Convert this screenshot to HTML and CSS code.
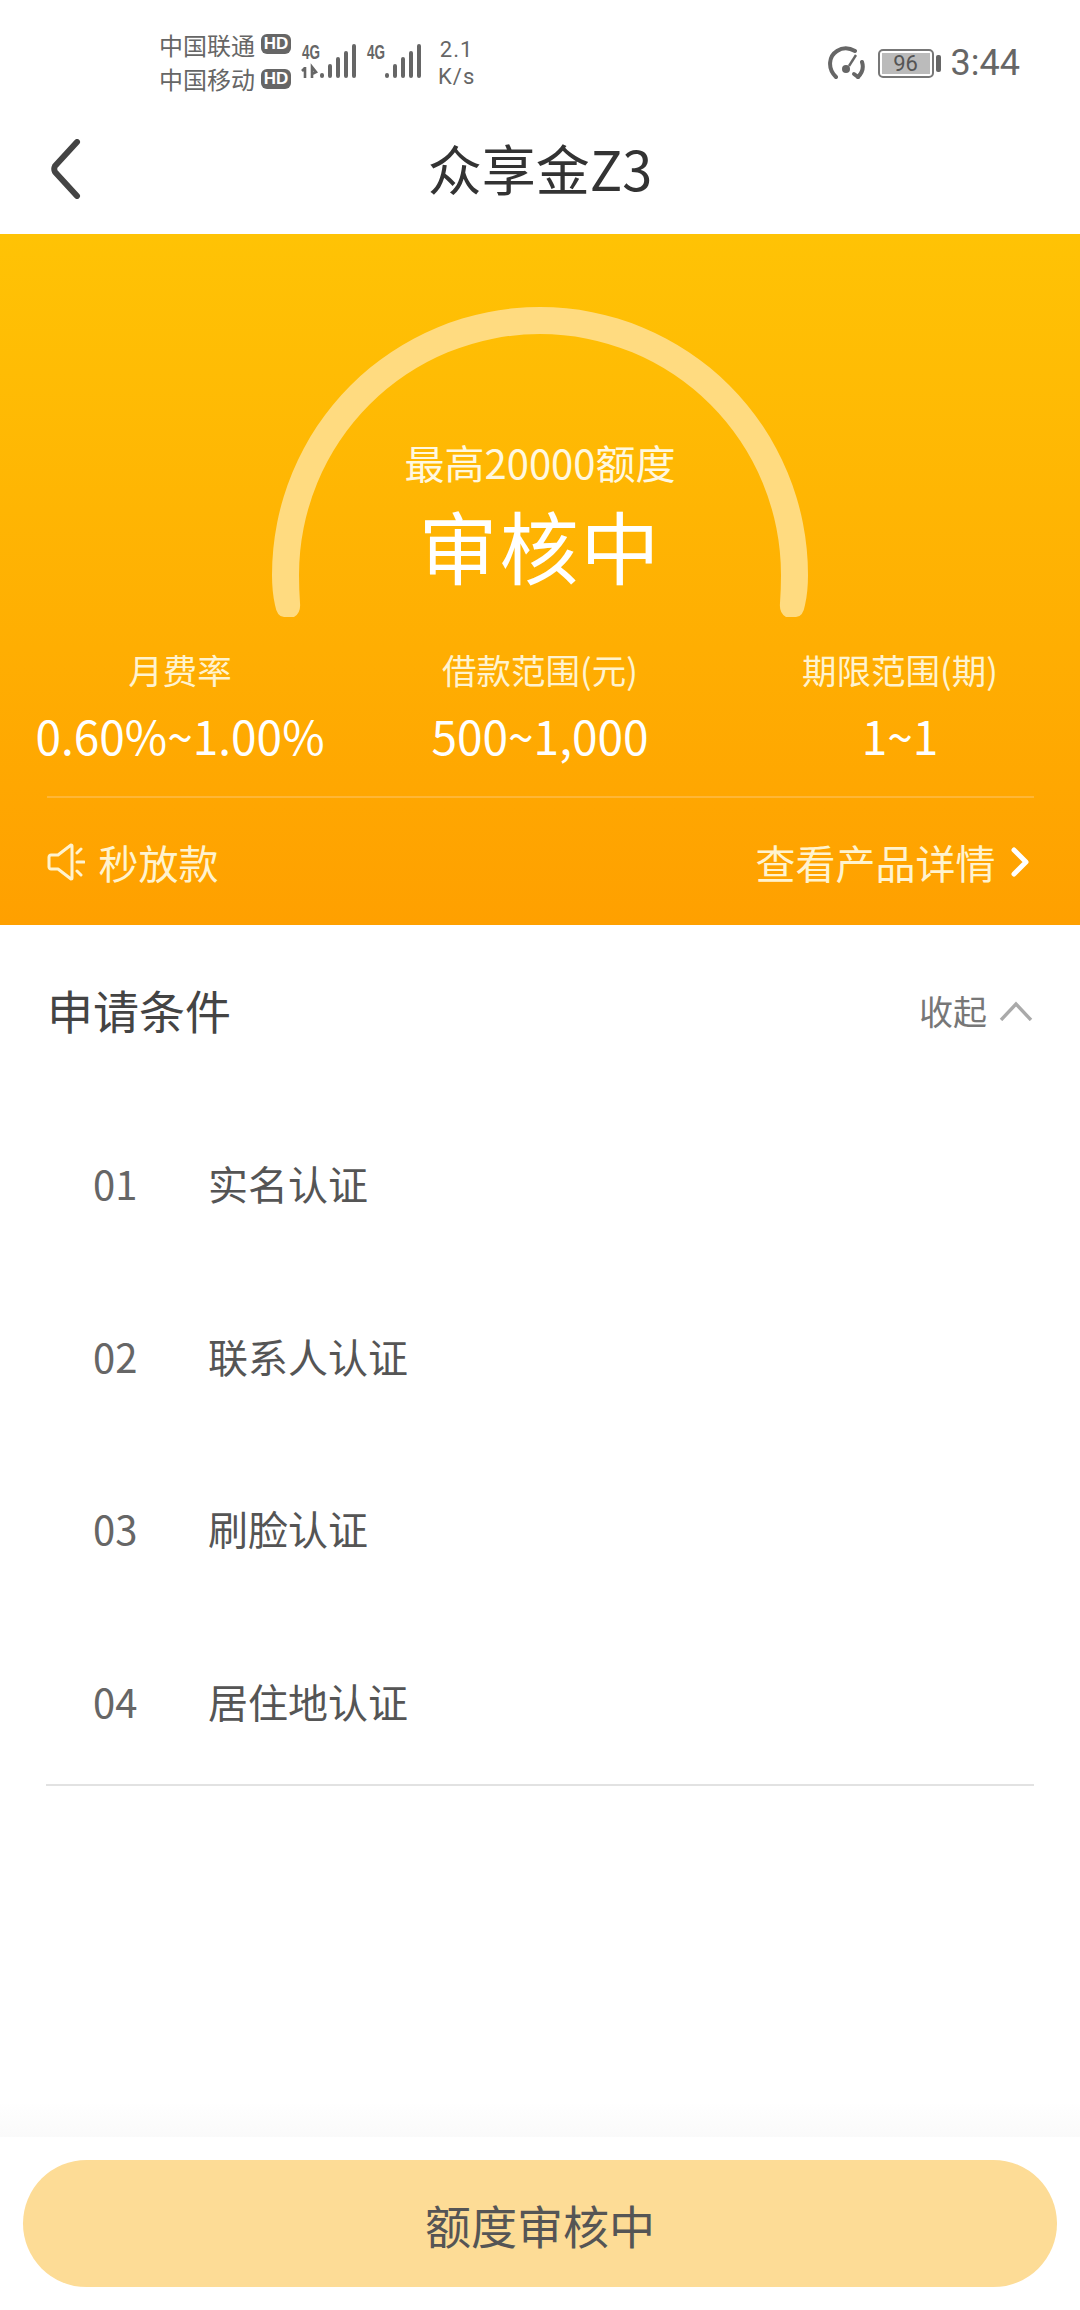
FILE: index.html
```html
<!DOCTYPE html>
<html lang="zh-CN">
<head>
<meta charset="UTF-8">
<title>众享金Z3</title>
<link rel="stylesheet" href="styles.css">
</head>
<body>
<div class="page">
  <div class="statusbar">
    <div class="carriers">
      <div class="carrier">中国联通<span class="hd">HD</span></div>
      <div class="carrier">中国移动<span class="hd">HD</span></div>
    </div>
    <svg class="signal" width="125" height="40" viewBox="300 40 125 40">
      <g fill="#666" font-family="'Liberation Sans',sans-serif" font-weight="700" font-size="20">
        <text x="302" y="59" textLength="18" lengthAdjust="spacingAndGlyphs">4G</text>
        <text x="367" y="59" textLength="18" lengthAdjust="spacingAndGlyphs">4G</text>
      </g>
      <path d="M305 67v11M302 71l3-3M312 78V67l4 5-4 2" fill="none" stroke="#666" stroke-width="2.6"/>
      <g stroke="#666" stroke-width="4" stroke-linecap="round">
        <path d="M322 75v1M330 66v10M338 59v17M346 53v23M354 46v30"/>
        <path d="M387 75v1M395 66v10M403 59v17M411 53v23M419 46v30"/>
      </g>
    </svg>
    <div class="speed"><div>2.1</div><div>K/s</div></div>
    <div class="status-right">
      <svg class="gaugeicon" width="38" height="34" viewBox="0 0 38 34">
        <path d="M8 31C-1 22 1 10 9 5c6-4 13-3 18 0M34 16c2 6 0 11-4 15" fill="none" stroke="#666" stroke-width="4" stroke-linecap="round"/>
        <path d="M28 9L21 20" stroke="#666" stroke-width="2.4"/>
        <circle cx="18" cy="23" r="4" fill="#666"/>
        <path d="M26 28l4 3" stroke="#666" stroke-width="4" stroke-linecap="round"/>
      </svg>
      <div class="battery"><div class="battery-body"><span class="battery-level">96</span></div><div class="battery-cap"></div></div>
      <div class="clock">3:44</div>
    </div>
  </div>

  <div class="navbar">
    <svg class="back" width="32" height="60" viewBox="0 0 32 60">
      <path d="M28 3L6 27c-1 2-1 4 0 6l22 24" fill="none" stroke="#444" stroke-width="6" stroke-linecap="round" stroke-linejoin="round"/>
    </svg>
    <div class="navtitle">众享金Z3</div>
  </div>

  <div class="hero">
    <div class="gauge">
      <svg class="gauge-arc" width="536" height="310" viewBox="0 0 536 310">
        <path d="M0 268Q0 285 3 298Q5 310 12 310H22Q29 306 28 296Q27 282 27 268A241 241 0 0 1 509 268Q509 282 508 296Q507 306 514 310H524Q531 310 533 298Q536 285 536 268A268 268 0 0 0 0 268Z" fill="#ffdb80"/>
      </svg>
      <div class="gauge-sub">最高20000额度</div>
      <div class="gauge-main">审核中</div>
    </div>
    <div class="stats">
      <div class="stat"><div class="stat-label">月费率</div><div class="stat-value">0.60%~1.00%</div></div>
      <div class="stat"><div class="stat-label">借款范围(元)</div><div class="stat-value">500~1,000</div></div>
      <div class="stat"><div class="stat-label">期限范围(期)</div><div class="stat-value">1~1</div></div>
    </div>
    <div class="hero-foot">
      <div class="notice">
        <svg width="38" height="38" viewBox="0 0 38 38">
          <path d="M4 12h7L24 2c1 0 1 1 1 1v32s0 1-1 1L11 26H4c-1 0-2-1-2-2V14c0-1 1-2 2-2z" fill="none" stroke="#fff3cf" stroke-width="3" stroke-linejoin="round"/>
          <path d="M34 6l-4 4M30 19h7M34 32l-4-4" fill="none" stroke="#fff3cf" stroke-width="3" stroke-linecap="round"/>
        </svg>
        <span>秒放款</span>
      </div>
      <div class="detail-link">
        <span>查看产品详情</span>
        <svg width="18" height="30" viewBox="0 0 18 30">
          <path d="M3 3l12 12L3 27" fill="none" stroke="#fff" stroke-width="5" stroke-linecap="round" stroke-linejoin="round"/>
        </svg>
      </div>
    </div>
  </div>

  <div class="section-head">
    <div class="section-title">申请条件</div>
    <div class="collapse">
      <span>收起</span>
      <svg width="34" height="20" viewBox="0 0 34 20"><path d="M2 19L17 3l15 16" fill="none" stroke="#aaa" stroke-width="3.4"/></svg>
    </div>
  </div>

  <ul class="steps">
    <li class="step"><span class="step-no">01</span><span>实名认证</span></li>
    <li class="step"><span class="step-no">02</span><span>联系人认证</span></li>
    <li class="step"><span class="step-no">03</span><span>刷脸认证</span></li>
    <li class="step"><span class="step-no">04</span><span>居住地认证</span></li>
  </ul>

  <div class="spacer"></div>

  <div class="bottom">
    <div class="submit">额度审核中</div>
  </div>
</div>
</body>
</html>
```

FILE: styles.css
```css
* {
  box-sizing: border-box;
}

html, body {
  margin: 0;
  padding: 0;
}

body {
  background: #fff;
  font-family: "Noto Sans CJK SC", "Noto Sans", sans-serif;
  color: #444;
}

.page {
  width: 1080px;
  height: 2310px;
  display: flex;
  flex-direction: column;
  overflow: hidden;
}

/* status bar */
.statusbar {
  height: 118px;
  display: flex;
  align-items: flex-start;
  padding: 27px 60px 0 159px;
  color: #666;
}

.carriers {
  width: 141px;
}

.carrier {
  display: flex;
  align-items: center;
  height: 34.5px;
  font-size: 24px;
  white-space: nowrap;
}

.hd {
  background: #666;
  color: #fff;
  font: 700 17px "Liberation Sans", sans-serif;
  width: 30px;
  height: 20px;
  line-height: 20px;
  text-align: center;
  border-radius: 6px;
  margin-left: 6px;
}

.signal {
  margin-top: 13px;
}

.speed {
  margin-left: 13px;
  font: 22px/27px Roboto, sans-serif;
  letter-spacing: 1px;
  text-align: center;
  padding-top: 9px;
}

.status-right {
  margin-left: auto;
  height: 72px;
  display: flex;
  align-items: center;
}

.battery {
  display: flex;
  align-items: center;
  margin-left: 12px;
}

.battery-body {
  width: 56px;
  height: 29px;
  border: 2px solid #777;
  border-radius: 5px;
  padding: 2px;
  display: flex;
}

.battery-level {
  flex: 1;
  background: #bbb;
  font: 22px/21px Roboto, sans-serif;
  text-align: center;
  color: #555;
}

.battery-cap {
  width: 5px;
  height: 17px;
  background: #666;
  border-radius: 2px;
  margin-left: 2px;
}

.clock {
  margin-left: 10px;
  font: 36px Roboto, sans-serif;
}

/* nav */
.navbar {
  height: 116px;
  display: flex;
  align-items: center;
  justify-content: center;
  position: relative;
}

.back {
  position: absolute;
  left: 49px;
  top: 21px;
}

.navtitle {
  font-size: 54px;
  line-height: 76px;
  color: #333;
  margin-bottom: 17px;
}

/* hero */
.hero {
  height: 691px;
  background: linear-gradient(#ffc305, #ffa000);
  display: flex;
  flex-direction: column;
  align-items: center;
  color: #fff;
  padding-top: 73px;
}

.gauge {
  position: relative;
  width: 536px;
  height: 310px;
  text-align: center;
}

.gauge-arc {
  position: absolute;
  left: 0;
  top: 0;
}

.gauge-sub {
  position: relative;
  padding-top: 127px;
  font-size: 40px;
  line-height: 56px;
  color: #fff8e0;
}

.gauge-main {
  position: relative;
  font-size: 79px;
  line-height: 109px;
  letter-spacing: 2px;
}

.stats {
  width: 100%;
  display: grid;
  grid-template-columns: repeat(3, 1fr);
  margin-top: 27px;
  text-align: center;
}

.stat-label {
  font-size: 34.5px;
  line-height: 50px;
  color: #fff3cf;
}

.stat-value {
  font-size: 46px;
  line-height: 60px;
  margin-top: 11px;
  white-space: nowrap;
}

.hero-foot {
  width: 987px;
  margin-top: 31px;
  border-top: 2px solid #ffb636;
  flex: 1;
  display: flex;
  justify-content: space-between;
  align-items: center;
  font-size: 40px;
  color: #fff3cf;
}

.notice,
.detail-link {
  display: flex;
  align-items: center;
}

.notice span {
  margin-left: 14px;
}

.detail-link svg {
  margin-left: 15px;
  margin-right: 5px;
}

/* conditions */
.section-head {
  height: 172px;
  padding: 0 47px 3px 47px;
  display: flex;
  justify-content: space-between;
  align-items: center;
}

.section-title {
  font-size: 46px;
  line-height: 66px;
  margin-bottom: 2px;
  color: #444;
}

.collapse {
  display: flex;
  align-items: center;
  font-size: 34px;
  color: #777;
  margin-top: 2px;
}

.collapse svg {
  margin-left: 12px;
}

.steps {
  list-style: none;
  margin: 0 46px;
  padding: 0;
  height: 689px;
  border-bottom: 2px solid #e2e2e2;
}

.step {
  height: 172.5px;
  flex-shrink: 0;
  display: flex;
  align-items: center;
  font-size: 40px;
  color: #555;
  padding-left: 47px;
}

.step-no {
  width: 115px;
  color: #666;
}

.spacer {
  flex: 1;
  background: linear-gradient(#fff 90%, #fafafa);
}

.bottom {
  height: 173px;
  padding: 23px;
}

.submit {
  height: 127px;
  border-radius: 64px;
  background: #fddc96;
  color: #555;
  font-size: 46px;
  display: flex;
  align-items: center;
  justify-content: center;
}
```
